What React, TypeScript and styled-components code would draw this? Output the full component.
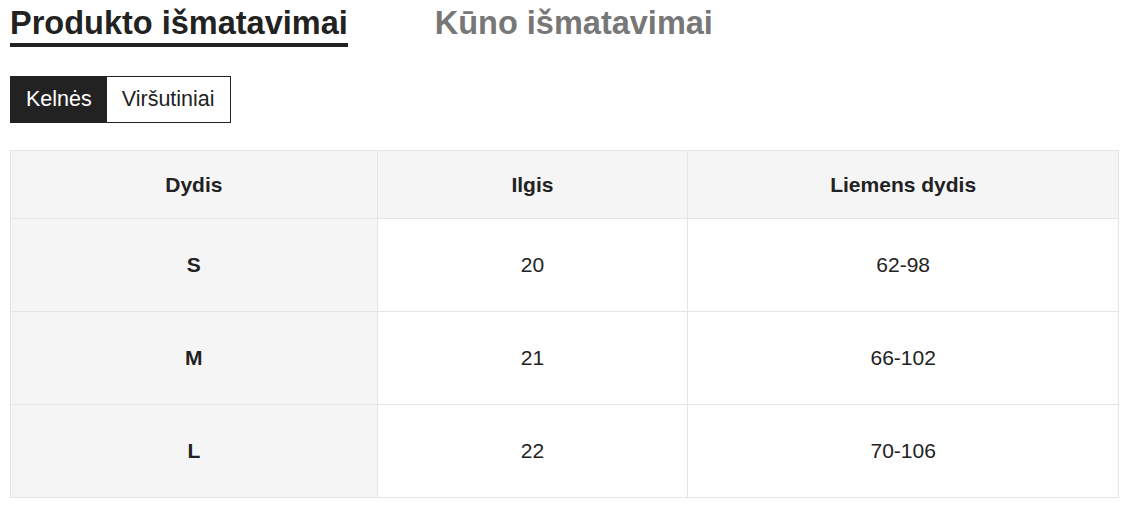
import React, { useState } from "react";
import styled, { createGlobalStyle } from "styled-components";

const GlobalStyle = createGlobalStyle`
    body {
        margin: 0;
        background: #ffffff;
        font-family: "Liberation Sans", Arial, sans-serif;
        color: #222222;
    }
`;

const Page = styled.div`
    padding: 5px 9px 0 10px;
`;

const Headings = styled.div`
    display: flex;
    align-items: flex-start;
    gap: 87px;
`;

const Heading = styled.h2<{ $active?: boolean }>`
    margin: 0;
    padding-bottom: 2px;
    font-size: 32.5px;
    line-height: 36px;
    font-weight: 700;
    color: ${({ $active }) => ($active ? "#222222" : "#777777")};
    border-bottom: 4px solid ${({ $active }) => ($active ? "#222222" : "transparent")};
    cursor: pointer;
`;

const Tabs = styled.div`
    display: inline-flex;
    margin-top: 29px;
    border: 1px solid #222222;
`;

const Tab = styled.button<{ $active?: boolean }>`
    height: 45px;
    padding: 0 15px;
    border: none;
    background: ${({ $active }) => ($active ? "#222222" : "#ffffff")};
    color: ${({ $active }) => ($active ? "#ffffff" : "#222222")};
    font-family: inherit;
    font-size: 21.5px;
    cursor: pointer;
`;

const Table = styled.table`
    width: 100%;
    margin-top: 27px;
    border-collapse: collapse;
    table-layout: fixed;
`;

const HeadCell = styled.th`
    height: 67px;
    padding: 0;
    background: #f5f5f5;
    border: 1px solid #e5e5e5;
    font-size: 21px;
    font-weight: 700;
    text-align: center;
`;

const Cell = styled.td<{ $label?: boolean }>`
    height: 92px;
    padding: 0;
    background: ${({ $label }) => ($label ? "#f5f5f5" : "#ffffff")};
    border: 1px solid #e5e5e5;
    font-size: 21px;
    font-weight: ${({ $label }) => ($label ? 700 : 400)};
    text-align: center;
`;

const rows = [
    { size: "S", length: "20", waist: "62-98" },
    { size: "M", length: "21", waist: "66-102" },
    { size: "L", length: "22", waist: "70-106" },
];

const App: React.FC = () => {
    const [tab, setTab] = useState("kelnes");

    return (
        <Page>
            <GlobalStyle />
            <Headings>
                <Heading $active>Produkto išmatavimai</Heading>
                <Heading>Kūno išmatavimai</Heading>
            </Headings>
            <Tabs>
                <Tab $active={tab === "kelnes"} onClick={() => setTab("kelnes")}>
                    Kelnės
                </Tab>
                <Tab $active={tab === "virsutiniai"} onClick={() => setTab("virsutiniai")}>
                    Viršutiniai
                </Tab>
            </Tabs>
            <Table>
                <colgroup>
                    <col style={{ width: "33.09%" }} />
                    <col style={{ width: "28.04%" }} />
                    <col />
                </colgroup>
                <thead>
                    <tr>
                        <HeadCell>Dydis</HeadCell>
                        <HeadCell>Ilgis</HeadCell>
                        <HeadCell>Liemens dydis</HeadCell>
                    </tr>
                </thead>
                <tbody>
                    {rows.map((r) => (
                        <tr key={r.size}>
                            <Cell $label>{r.size}</Cell>
                            <Cell>{r.length}</Cell>
                            <Cell>{r.waist}</Cell>
                        </tr>
                    ))}
                </tbody>
            </Table>
        </Page>
    );
};

export default App;
